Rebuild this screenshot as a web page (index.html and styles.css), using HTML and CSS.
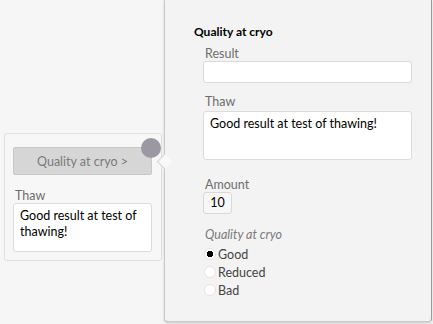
FILE: index.html
```html
<!DOCTYPE html>
<html>
<head>
   <title>Quality at cryo</title>
   <link rel="stylesheet" href="styles.css">
</head>
<body>
<div id="page">

   <div class="card">
      <button class="btn">Quality at cryo &gt;</button>
      <span class="dot"></span>
      <label class="lbl lbl-thaw">Thaw</label>
      <div class="area">Good result at test of thawing!</div>
   </div>

   <div class="popup">
      <span class="arrow"></span>
      <h2>Quality at cryo</h2>

      <div class="field f-result">
         <label class="lbl">Result</label>
         <div class="input"></div>
      </div>

      <div class="field f-thaw">
         <label class="lbl">Thaw</label>
         <div class="area area-wide">Good result at test of thawing!</div>
      </div>

      <div class="field f-amount">
         <label class="lbl">Amount</label>
         <div class="input input-small">10</div>
      </div>

      <div class="field">
         <label class="lbl lbl-em">Quality at cryo</label>
         <div class="radios">
            <label class="radio"><input type="radio" name="q" checked> Good</label>
            <label class="radio"><input type="radio" name="q"> Reduced</label>
            <label class="radio"><input type="radio" name="q"> Bad</label>
         </div>
      </div>
   </div>

</div>
</body>
</html>
```

FILE: styles.css
```css
* { margin: 0; padding: 0; box-sizing: border-box; }
html, body { height: 100%; }
body { background: #f6f6f6; font-family: Lato, "Open Sans", Arial, sans-serif; font-size: 12px; color: #000; }

#page { position: relative; width: 433px; height: 324px; overflow: hidden; padding: 133px 0 0 4px; }

.card { position: relative; width: 158px; height: 128px; padding: 13px 9px 0 8px; background: #f7f7f7; border: 1px solid #e0e0e0; border-radius: 3px; }
.btn { display: block; width: 139px; height: 28px; background: #d6d6d6; border: 1px solid #c8c8c8; border-radius: 2px; color: #7a7a7a; font-family: inherit; font-size: 12.5px; }
.dot { position: absolute; top: 4px; left: 136px; width: 20px; height: 20px; border-radius: 50%; background: #9b98a1; }

.lbl { display: block; color: #6d6d6d; font-size: 12.5px; line-height: 15px; padding-left: 2px; }
.lbl-thaw { margin-top: 13px; }
.area { height: 49px; margin-top: 0; padding: 4px 6px; background: #fff; border: 1px solid #dcdcdc; border-radius: 3px; line-height: 16px; font-size: 12.5px; }

.popup { position: absolute; left: 164px; top: -1px; width: 268px; height: 323px; padding: 25px 20px 0 29px; background: #f3f3f3; border: 1px solid #c9c9c9; border-right-color: #9a9a9a; border-radius: 0 0 4px 4px; box-shadow: 0 2px 3px rgba(0,0,0,0.15); }
.arrow { position: absolute; left: -6px; top: 156px; width: 11px; height: 11px; background: #f9f9f9; border-left: 1px solid #d4d4d4; border-bottom: 1px solid #d4d4d4; transform: rotate(45deg); }
.popup h2 { font-size: 12px; font-weight: bold; line-height: 14px; margin-bottom: 7px; }

.field { padding-left: 9px; }
.f-result { margin-bottom: 11px; }
.f-thaw { margin-bottom: 17px; }
.f-thaw .lbl { margin-bottom: 2px; }
.f-amount { margin-bottom: 13px; }
.input { width: 209px; height: 22px; background: #fff; border: 1px solid #d9d9d9; border-radius: 3px; }
.input-small { width: 29px; padding-top: 3px; text-align: center; background: #f7f7f7; line-height: 14px; font-size: 12.5px; }
.area-wide { width: 209px; }

.lbl-em { font-style: italic; color: #7a7a7a; }
.radios { margin-top: 3px; }
.radio { display: flex; align-items: center; height: 18px; color: #444; font-size: 12.5px; }
.radio input { appearance: none; -webkit-appearance: none; width: 12px; height: 12px; margin: 0 2px 0 1px; border-radius: 50%; background: #fff; border: 1px solid #e4e4e4; }
.radio input:checked { background: radial-gradient(circle, #000 0 3px, #fff 3.5px); }
```
